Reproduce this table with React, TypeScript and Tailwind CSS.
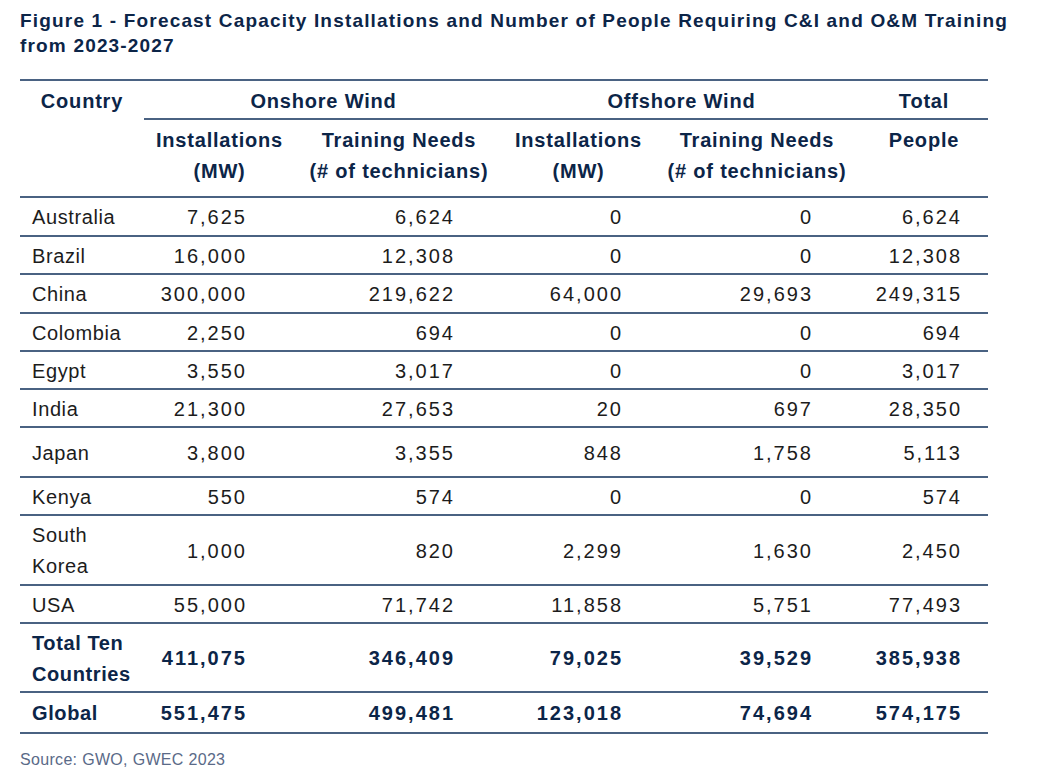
import React from 'react';

type Row = {
  country: React.ReactNode;
  cells: string[];
  h: string;
  bold?: boolean;
};

const rows: Row[] = [
  { country: 'Australia', cells: ['7,625', '6,624', '0', '0', '6,624'], h: 'h-[39px]' },
  { country: 'Brazil', cells: ['16,000', '12,308', '0', '0', '12,308'], h: 'h-[38px]' },
  { country: 'China', cells: ['300,000', '219,622', '64,000', '29,693', '249,315'], h: 'h-[39px]' },
  { country: 'Colombia', cells: ['2,250', '694', '0', '0', '694'], h: 'h-[38px]' },
  { country: 'Egypt', cells: ['3,550', '3,017', '0', '0', '3,017'], h: 'h-[38px]' },
  { country: 'India', cells: ['21,300', '27,653', '20', '697', '28,350'], h: 'h-[38px]' },
  { country: 'Japan', cells: ['3,800', '3,355', '848', '1,758', '5,113'], h: 'h-[50px]' },
  { country: 'Kenya', cells: ['550', '574', '0', '0', '574'], h: 'h-[38px]' },
  {
    country: (
      <>
        South
        <br />
        Korea
      </>
    ),
    cells: ['1,000', '820', '2,299', '1,630', '2,450'],
    h: 'h-[70px]',
  },
  { country: 'USA', cells: ['55,000', '71,742', '11,858', '5,751', '77,493'], h: 'h-[38px]' },
  {
    country: (
      <>
        Total Ten
        <br />
        Countries
      </>
    ),
    cells: ['411,075', '346,409', '79,025', '39,529', '385,938'],
    h: 'h-[69px]',
    bold: true,
  },
  { country: 'Global', cells: ['551,475', '499,481', '123,018', '74,694', '574,175'], h: 'h-[41px]', bold: true },
];

// right padding per numeric column (letter-spacing leaves ~2px trailing space)
const pad = ['pr-[48px]', 'pr-[48px]', 'pr-[31px]', 'pr-[47px]', 'pr-[26px]'];

const line = 'border-b-2 border-[#4a6282]';

export default function App() {
  return (
    <div
      className="w-[1040px] h-[782px] bg-white px-5 pt-[8px] text-[#1c1c1c]"
      style={{ fontFamily: '"Liberation Sans", Arial, sans-serif' }}
    >
      <h1 className="text-[19px] leading-[25px] font-bold tracking-[0.062em] text-[#0c2548]">
        Figure 1 - Forecast Capacity Installations and Number of People Requiring C&amp;I and O&amp;M Training
        <br />
        from 2023-2027
      </h1>

      <table className="mt-[21px] w-[968px] table-fixed border-collapse border-t-2 border-[#4a6282] text-[20px] leading-[31px]">
        <colgroup>
          <col className="w-[124px]" />
          <col className="w-[151px]" />
          <col className="w-[208px]" />
          <col className="w-[151px]" />
          <col className="w-[206px]" />
          <col className="w-[128px]" />
        </colgroup>
        <thead className="font-bold tracking-[0.04em] text-[#0c2548]">
          <tr className="h-[39px]">
            <th rowSpan={2} className={`${line} align-top pt-[5px] text-center`}>
              Country
            </th>
            <th colSpan={2} className={`${line} pt-[3px] text-center`}>
              Onshore Wind
            </th>
            <th colSpan={2} className={`${line} pt-[3px] text-center`}>
              Offshore Wind
            </th>
            <th className={`${line} pt-[3px] text-center`}>Total</th>
          </tr>
          <tr className="h-[78px]">
            <th className={`${line} align-top pt-[5px] text-center`}>
              Installations
              <br />
              (MW)
            </th>
            <th className={`${line} align-top pt-[5px] text-center`}>
              Training Needs
              <br />
              (# of technicians)
            </th>
            <th className={`${line} align-top pt-[5px] text-center`}>
              Installations
              <br />
              (MW)
            </th>
            <th className={`${line} align-top pt-[5px] text-center`}>
              Training Needs
              <br />
              (# of technicians)
            </th>
            <th className={`${line} align-top pt-[5px] text-center`}>People</th>
          </tr>
        </thead>
        <tbody>
          {rows.map((r, i) => (
            <tr key={i} className={`${r.h} ${r.bold ? 'font-bold text-[#0c2548]' : ''}`}>
              <td className={`${line} pl-3 pt-[2px] align-middle tracking-[0.03em]`}>{r.country}</td>
              {r.cells.map((c, j) => (
                <td key={j} className={`${line} ${pad[j]} pt-[2px] text-right align-middle tracking-[0.1em]`}>
                  {c}
                </td>
              ))}
            </tr>
          ))}
        </tbody>
      </table>

      <p className="mt-[14px] text-[16px] tracking-[0.02em] text-[#5a6a88]">Source: GWO, GWEC 2023</p>
    </div>
  );
}
